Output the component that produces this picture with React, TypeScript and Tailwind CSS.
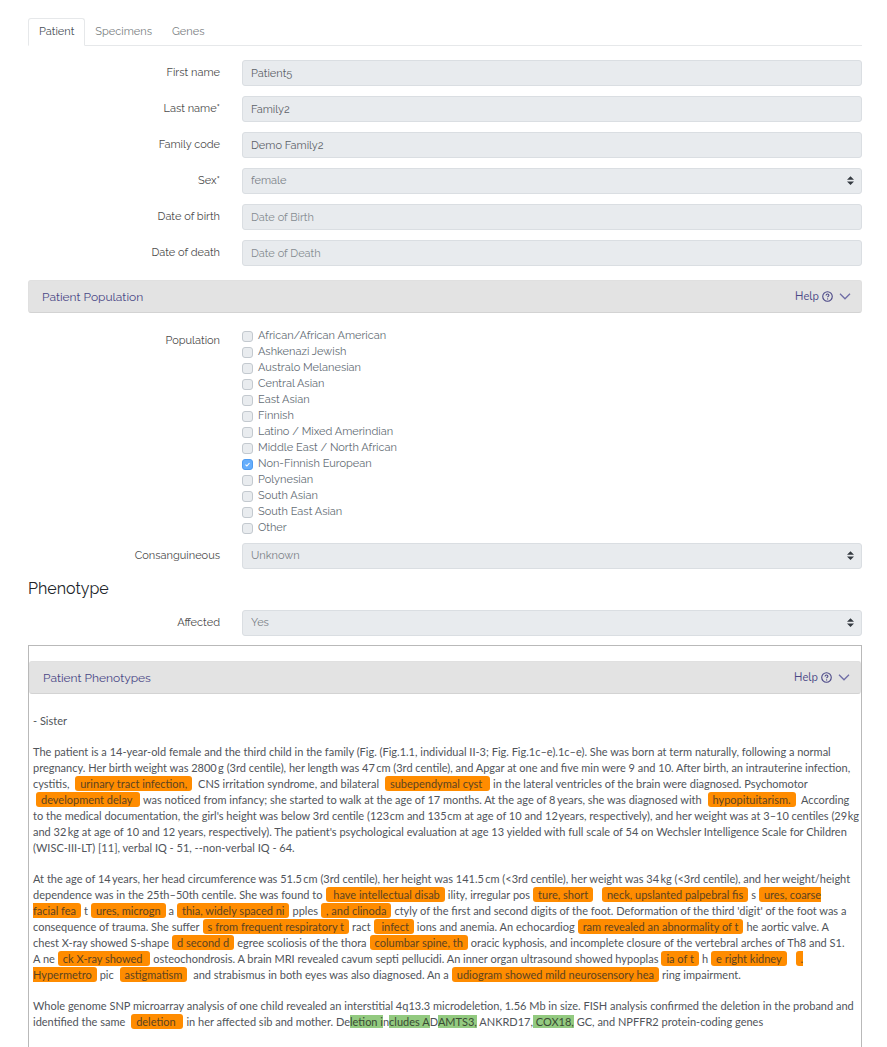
import type { ReactNode } from "react";

const controlClass =
  "block h-[26px] w-full rounded-[3px] border border-[#dadee2] bg-[#e8ebee] px-2 text-[11px] placeholder:text-[#858b91]";

function Row({ id, label, children }: { id: string; label: string; children: ReactNode }) {
  return (
    <div className="-mx-[11px] flex items-center">
      <label htmlFor={id} className="w-1/4 px-[11px] text-right text-[#4c4c4c]">
        {label}
      </label>
      <div className="flex-1 px-[11px]">{children}</div>
    </div>
  );
}

function TextRow({ id, label, value, placeholder }: { id: string; label: string; value?: string; placeholder?: string }) {
  return (
    <Row id={id} label={label}>
      <input
        id={id}
        type="text"
        disabled
        defaultValue={value}
        placeholder={placeholder}
        className={`${controlClass} text-[#5c6268]`}
      />
    </Row>
  );
}

function SelectRow({ id, label, value }: { id: string; label: string; value: string }) {
  return (
    <Row id={id} label={label}>
      <div className="relative">
        <select id={id} disabled className={`${controlClass} appearance-none text-[#7b8187] opacity-100`}>
          <option>{value}</option>
        </select>
        <svg viewBox="0 0 4 5" className="absolute top-2 right-2 h-[9px] w-[7px]" aria-hidden="true">
          <path fill="#343a40" d="M2 0L0 2h4zm0 5L0 3h4z" />
        </svg>
      </div>
    </Row>
  );
}

function SectionBar({ title }: { title: string }) {
  return (
    <div className="flex h-[33px] items-center justify-between rounded-[3px] border border-[#e0e0e0] border-b-[#d3d3d3] bg-[#e3e3e3] pr-[10px] pl-[13px] text-[#4a4786]">
      <h2 className="text-[12px] font-normal">{title}</h2>
      <div className="flex items-center gap-[6px]">
        <a href="#help" className="flex items-center gap-[3px] font-['Nunito','Lato',sans-serif] text-[11px]">
          Help
          <svg viewBox="0 0 12 12" className="size-[11px]" fill="none" stroke="currentColor" aria-hidden="true">
            <circle cx="6" cy="6" r="5.2" strokeWidth="1.2" />
            <path d="M4.4 4.9c0-1 .7-1.6 1.6-1.6s1.6.6 1.6 1.4c0 1-1.5 1.1-1.5 2.2" strokeWidth="1.1" />
            <circle cx="6.1" cy="8.6" r=".7" fill="currentColor" stroke="none" />
          </svg>
        </a>
        <button type="button" aria-label={`Toggle ${title}`}>
          <svg viewBox="0 0 12 12" className="size-3" fill="none" stroke="#6f6da6" strokeWidth="1.3" aria-hidden="true">
            <path d="M1 2.8l5 5 5-5" />
          </svg>
        </button>
      </div>
    </div>
  );
}

function Hit({ children }: { children: ReactNode }) {
  return <mark className="mx-[3px] rounded-[3px] bg-[#ff8c00] px-[5px] py-px text-[#5c4320]">{children}</mark>;
}

function Gene({ children }: { children: ReactNode }) {
  return <mark className="bg-[#93ca80] text-[#3a4a34]">{children}</mark>;
}

const populations = [
  "African/African American",
  "Ashkenazi Jewish",
  "Australo Melanesian",
  "Central Asian",
  "East Asian",
  "Finnish",
  "Latino / Mixed Amerindian",
  "Middle East / North African",
  "Non-Finnish European",
  "Polynesian",
  "South Asian",
  "South East Asian",
  "Other",
];

export default function App() {
  return (
    <main className="bg-white pt-[18px] pr-[25px] pl-[28px] font-['Raleway','Lato',sans-serif] text-[11px] leading-[16px]">
      <nav className="flex border-b border-[#e6e8ea]">
        <a href="#patient" className="-mb-px rounded-t-[3px] border border-b-white border-[#e6e8ea] px-[10px] pt-[5px] pb-[5px] text-[#495057]">
          Patient
        </a>
        <a href="#specimens" className="px-[10px] pt-[6px] pb-[5px] text-[#7b7f83]">
          Specimens
        </a>
        <a href="#genes" className="px-[10px] pt-[6px] pb-[5px] text-[#7b7f83]">
          Genes
        </a>
      </nav>

      <div className="flex flex-col gap-[10px] pt-[14px]">
        <TextRow id="first-name" label="First name" value="Patient5" />
        <TextRow id="last-name" label="Last name*" value="Family2" />
        <TextRow id="family-code" label="Family code" value="Demo Family2" />
        <SelectRow id="sex" label="Sex*" value="female" />
        <TextRow id="birth" label="Date of birth" placeholder="Date of Birth" />
        <TextRow id="death" label="Date of death" placeholder="Date of Death" />
      </div>

      <div className="pt-[14px]">
        <SectionBar title="Patient Population" />
      </div>

      <fieldset className="-mx-[11px] flex pt-[15px]" aria-labelledby="population-label">
        <div id="population-label" className="w-1/4 px-[11px] pt-[5px] text-right text-[#4c4c4c]">
          Population
        </div>
        <div className="flex-1 px-[11px]">
          {populations.map((name) => (
            <label key={name} className="flex h-4 items-center gap-[5px] text-[#646d75]">
              <span className="relative flex">
                <input
                  type="checkbox"
                  disabled
                  defaultChecked={name === "Non-Finnish European"}
                  className="peer size-[11px] appearance-none rounded-[3px] border border-[#c3c9cf] bg-[#e9ecef] checked:border-[#4f9cf0] checked:bg-[#66aefc]"
                />
                <svg
                  viewBox="0 0 8 8"
                  className="absolute top-[3px] left-[3px] hidden size-[5px] peer-checked:block"
                  fill="none"
                  stroke="white"
                  strokeWidth="1.8"
                  aria-hidden="true"
                >
                  <path d="M.8 4.2l2.2 2.2 4.2-4.8" />
                </svg>
              </span>
              {name}
            </label>
          ))}
        </div>
      </fieldset>

      <div className="pt-[7px]">
        <SelectRow id="consanguineous" label="Consanguineous" value="Unknown" />
      </div>

      <h1 className="pt-[9px] pb-[10px] text-[16px] leading-[22px] text-[#212529]">Phenotype</h1>

      <SelectRow id="affected" label="Affected" value="Yes" />

      <section className="mt-[9px] border border-b-0 border-[#b9b9b9] pt-[15px]">
        <SectionBar title="Patient Phenotypes" />
        <div className="flex flex-col gap-[15px] pt-[19px] pb-[18px] pl-1 font-['Lato',sans-serif] text-[11px] text-[#50545a]">
          <p>- Sister</p>
          <p>
            The patient is a 14-year-old female and the third child in the family (Fig. (Fig.1.1, individual II-3; Fig.
            Fig.1c–e).1c–e). She was born at term naturally, following a normal
            <br />
            pregnancy. Her birth weight was 2800&thinsp;g (3rd centile), her length was 47&thinsp;cm (3rd centile), and
            Apgar at one and five min were 9 and 10. After birth, an intrauterine infection,
            <br />
            cystitis, <Hit>urinary tract infection,</Hit> CNS irritation syndrome, and bilateral{" "}
            <Hit>subependymal cyst </Hit>in the lateral ventricles of the brain were diagnosed. Psychomotor
            <br />
            <Hit>development delay </Hit>was noticed from infancy; she started to walk at the age of 17 months. At the
            age of 8&thinsp;years, she was diagnosed with <Hit>hypopituitarism.</Hit> According
            <br />
            to the medical documentation, the girl's height was below 3rd centile (123&#8202;cm and 135&#8202;cm at age
            of 10 and 12&#8202;years, respectively), and her weight was at 3–10 centiles (29&#8202;kg
            <br />
            and 32&thinsp;kg at age of 10 and 12 years, respectively). The patient's psychological evaluation at age 13
            yielded with full scale of 54 on Wechsler Intelligence Scale for Children
            <br />
            (WISC-III-LT) [11], verbal IQ - 51, --non-verbal IQ - 64.
          </p>
          <p>
            At the age of 14&thinsp;years, her head circumference was 51.5&thinsp;cm (3rd centile), her height was
            141.5&thinsp;cm (&lt;3rd centile), her weight was 34&thinsp;kg (&lt;3rd centile), and her weight/height
            <br />
            dependence was in the 25th–50th centile. She was found to<Hit> have intellectual disab</Hit>ility,
            irregular pos<Hit>ture, short</Hit> <Hit>neck, upslanted palpebral fis</Hit>s
            <Hit>
              ures, coarse
              <br />
              facial fea
            </Hit>
            t<Hit>ures, microgn</Hit>a<Hit>thia, widely spaced ni</Hit>pples<Hit>, and clinoda</Hit>ctyly of the first
            and second digits of the foot. Deformation of the third 'digit' of the foot was a
            <br />
            consequence of trauma. She suffer<Hit>s from frequent respiratory t</Hit>ract<Hit> infect</Hit>ions and
            anemia. An echocardiog<Hit>ram revealed an abnormality of t</Hit>he aortic valve. A
            <br />
            chest X-ray showed S-shape<Hit>d second d</Hit>egree scoliosis of the thora<Hit>columbar spine, th</Hit>
            oracic kyphosis, and incomplete closure of the vertebral arches of Th8 and S1.
            <br />A ne<Hit>ck X-ray showed </Hit>osteochondrosis. A brain MRI revealed cavum septi pellucidi. An inner
            organ ultrasound showed hypoplas<Hit>ia of t</Hit>h<Hit>e right kidney</Hit>{" "}
            <Hit>
              .<br />
              Hypermetro
            </Hit>
            pic <Hit>astigmatism</Hit> and strabismus in both eyes was also diagnosed. An a
            <Hit>udiogram showed mild neurosensory hea</Hit>ring impairment.
          </p>
          <p>
            Whole genome SNP microarray analysis of one child revealed an interstitial 4q13.3 microdeletion, 1.56 Mb in
            size. FISH analysis confirmed the deletion in the proband and
            <br />
            identified the same <Hit>deletion </Hit>in her affected sib and mother. De<Gene>letion i</Gene>n
            <Gene>cludes A</Gene>D<Gene>AMTS3,</Gene> ANKRD17,<Gene> COX18,</Gene> GC, and NPFFR2 protein-coding genes
          </p>
        </div>
      </section>
    </main>
  );
}
